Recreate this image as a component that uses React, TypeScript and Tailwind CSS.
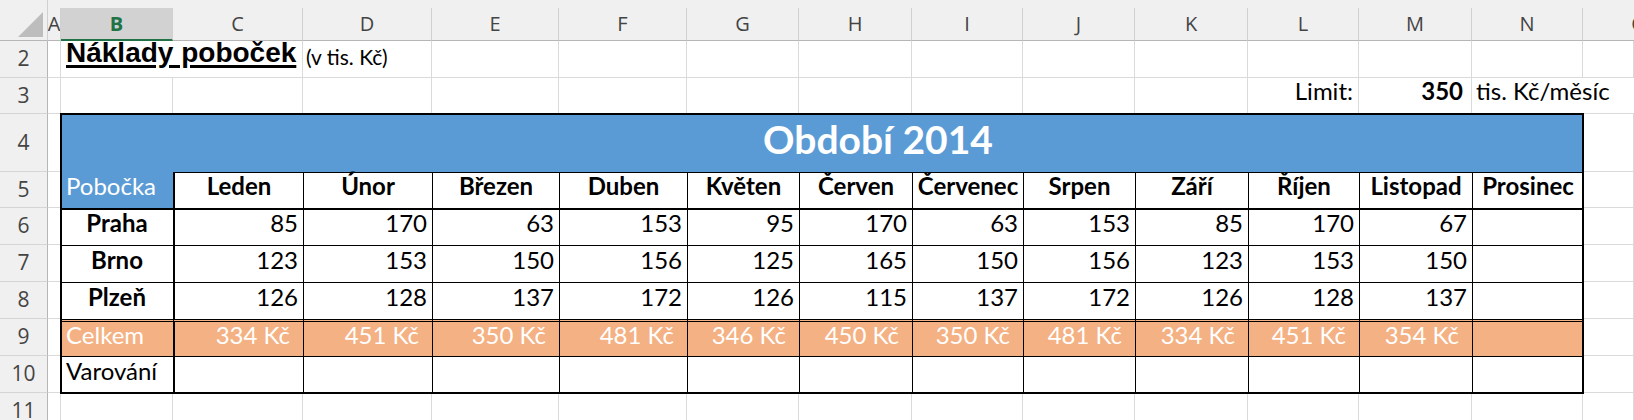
import React from "react";

type Col = { key: string; w: string };

const columns: Col[] = [
  { key: "A", w: "w-[13px]" },
  { key: "B", w: "w-[112px]" },
  { key: "C", w: "w-[130px]" },
  { key: "D", w: "w-[129px]" },
  { key: "E", w: "w-[127px]" },
  { key: "F", w: "w-[128px]" },
  { key: "G", w: "w-[112px]" },
  { key: "H", w: "w-[113px]" },
  { key: "I", w: "w-[111px]" },
  { key: "J", w: "w-[112px]" },
  { key: "K", w: "w-[113px]" },
  { key: "L", w: "w-[111px]" },
  { key: "M", w: "w-[113px]" },
  { key: "N", w: "w-[111px]" },
];

const months = [
  "Leden",
  "Únor",
  "Březen",
  "Duben",
  "Květen",
  "Červen",
  "Červenec",
  "Srpen",
  "Září",
  "Říjen",
  "Listopad",
  "Prosinec",
];

const branches = [
  { name: "Praha", values: [85, 170, 63, 153, 95, 170, 63, 153, 85, 170, 67] },
  { name: "Brno", values: [123, 153, 150, 156, 125, 165, 150, 156, 123, 153, 150] },
  { name: "Plzeň", values: [126, 128, 137, 172, 126, 115, 137, 172, 126, 128, 137] },
];

const totals = ["334", "451", "350", "481", "346", "450", "350", "481", "334", "451", "354"];

const rowNum =
  "w-[48px] shrink-0 h-full bg-[#f0f0f0] border-r border-b border-r-[#b6b6b6] border-b-[#d5d5d5] flex items-center justify-center font-['Open_Sans',sans-serif] text-[21px] text-[#444]";

function Blank({ w }: { w: string }) {
  return <div className={`${w} shrink-0 h-full border-r border-b border-[#dadada]`} />;
}

function SheetRow({ n, h, children }: { n: number; h: string; children: React.ReactNode }) {
  return (
    <div className={`flex ${h}`}>
      <div className={rowNum}>{n}</div>
      {children}
    </div>
  );
}

function ColumnHeader() {
  return (
    <div className="flex h-[41px] bg-[#f0f0f0] font-['Open_Sans',sans-serif] text-[20px] text-[#444]">
      <div className="w-[48px] shrink-0 h-full border-r border-b border-r-[#d0d0d0] border-b-[#b6b6b6] pl-[18px] pt-[12px]">
        <svg width="26" height="26" viewBox="0 0 26 26">
          <polygon points="25,0 25,25 0,25" fill="#bdbdbd" />
        </svg>
      </div>
      {columns.map((c) => (
        <div key={c.key} className={`${c.w} shrink-0 h-full pt-[8px]`}>
          <div
            className={
              c.key === "B"
                ? "h-full flex items-center justify-center overflow-hidden border-r border-r-[#d0d0d0] border-b-2 border-b-[#217346] bg-[#d2d2d2] text-[#217346] font-bold"
                : "h-full flex items-center justify-center overflow-hidden border-r border-b border-r-[#d0d0d0] border-b-[#b6b6b6]"
            }
          >
            {c.key}
          </div>
        </div>
      ))}
      <div className="flex-1 min-w-0 h-full pt-[8px] overflow-hidden">
        <div className="h-full w-[112px] flex items-center justify-center border-b border-b-[#b6b6b6]">
          O
        </div>
      </div>
    </div>
  );
}

function SummaryTable() {
  const head = "bg-white border-t border-l border-black font-bold flex items-end justify-center pb-[4px]";
  return (
    <div className="relative z-10 w-[1522px] shrink-0 grid grid-cols-[112px_130px_129px_127px_128px_112px_113px_111px_112px_113px_111px_113px_111px] grid-rows-[58px_36px_37px_37px_37px_37px_37px] outline-2 outline-black -outline-offset-1 whitespace-nowrap">
      <div className="bg-[#5b9bd5]" />
      <div className="col-span-12 bg-[#5b9bd5] flex items-end justify-center pb-[4px] text-white font-bold text-[39px]">
        Období 2014
      </div>

      <div className="bg-[#5b9bd5] text-white flex items-end pl-[5px] pb-[4px]">Pobočka</div>
      {months.map((m, i) => (
        <div key={m} className={i === 0 ? `${head} border-l-2` : head}>
          {m}
        </div>
      ))}

      {branches.map((b, r) => (
        <React.Fragment key={b.name}>
          <div
            className={`${r === 0 ? "border-t-2" : "border-t"} border-black font-bold flex items-end justify-center pb-[4px]`}
          >
            {b.name}
          </div>
          {months.map((m, i) => (
            <div
              key={m}
              className={`${r === 0 ? "border-t-2" : "border-t"} ${i === 0 ? "border-l-2" : "border-l"} border-black flex items-end justify-end pr-[5px] pb-[4px]`}
            >
              {b.values[i] ?? ""}
            </div>
          ))}
        </React.Fragment>
      ))}

      <div className="bg-[#f4b183] text-white border-t-[3px] border-double border-black flex items-end pl-[5px] pb-[3px]">
        Celkem
      </div>
      {months.map((m, i) => (
        <div
          key={m}
          className={`bg-[#f4b183] text-white border-t-[3px] border-double ${i === 0 ? "border-l-2" : "border-l"} border-black flex items-end justify-end pr-[13px] pb-[3px]`}
        >
          {totals[i] ? `${totals[i]} Kč` : ""}
        </div>
      ))}

      <div className="border-t border-black flex items-end pl-[5px] pb-[4px]">Varování</div>
      {months.map((m, i) => (
        <div key={m} className={`border-t ${i === 0 ? "border-l-2" : "border-l"} border-black`} />
      ))}
    </div>
  );
}

const blockRows = [
  { n: 4, h: "h-[58px]" },
  { n: 5, h: "h-[36px]" },
  { n: 6, h: "h-[37px]" },
  { n: 7, h: "h-[37px]" },
  { n: 8, h: "h-[37px]" },
  { n: 9, h: "h-[37px]" },
  { n: 10, h: "h-[37px]" },
];

export default function App() {
  return (
    <div className="w-[1634px] h-[420px] overflow-hidden bg-white font-['Lato',sans-serif] text-[24px] text-black">
      <ColumnHeader />

      <SheetRow n={2} h="h-[37px]">
        {columns.map((c) => {
          if (c.key === "B")
            return (
              <div
                key={c.key}
                className={`${c.w} shrink-0 h-full border-b border-[#dadada] flex items-end pl-[5px] pb-[3px] whitespace-nowrap`}
              >
                <span className="font-['Liberation_Sans',Arial,sans-serif] font-bold text-[28px] underline decoration-[3px] underline-offset-[3px]">
                  Náklady poboček
                </span>
              </div>
            );
          if (c.key === "D")
            return (
              <div
                key={c.key}
                className={`${c.w} shrink-0 h-full border-r border-b border-[#dadada] flex items-end pl-[3px] pb-[5px] whitespace-nowrap text-[21px]`}
              >
                (v tis. Kč)
              </div>
            );
          return <Blank key={c.key} w={c.w} />;
        })}
        <Blank w="flex-1 min-w-0" />
      </SheetRow>

      <SheetRow n={3} h="h-[36px]">
        {columns.map((c) => {
          if (c.key === "L")
            return (
              <div
                key={c.key}
                className={`${c.w} shrink-0 h-full border-r border-b border-[#dadada] flex items-end justify-end pr-[5px] pb-[4px] whitespace-nowrap`}
              >
                Limit:
              </div>
            );
          if (c.key === "M")
            return (
              <div
                key={c.key}
                className={`${c.w} shrink-0 h-full border-r border-b border-[#dadada] flex items-end justify-end pr-[8px] pb-[4px] font-bold whitespace-nowrap`}
              >
                350
              </div>
            );
          if (c.key === "N")
            return (
              <div
                key={c.key}
                className={`${c.w} shrink-0 h-full border-b border-[#dadada] flex items-end pl-[4px] pb-[4px] whitespace-nowrap`}
              >
                tis. Kč/měsíc
              </div>
            );
          return <Blank key={c.key} w={c.w} />;
        })}
        <div className="flex-1 min-w-0 h-full border-b border-[#dadada]" />
      </SheetRow>

      <div className="flex">
        <div className="flex flex-col">
          {blockRows.map((r) => (
            <div key={r.n} className={`${r.h} flex`}>
              <div className={rowNum}>{r.n}</div>
              <Blank w="w-[13px]" />
            </div>
          ))}
        </div>
        <SummaryTable />
        <div className="flex-1 min-w-0 flex flex-col">
          {blockRows.map((r) => (
            <div key={r.n} className={`${r.h} w-full border-r border-b border-[#dadada]`} />
          ))}
        </div>
      </div>

      <SheetRow n={11} h="h-[37px]">
        {columns.map((c) => (
          <Blank key={c.key} w={c.w} />
        ))}
        <Blank w="flex-1 min-w-0" />
      </SheetRow>
    </div>
  );
}
